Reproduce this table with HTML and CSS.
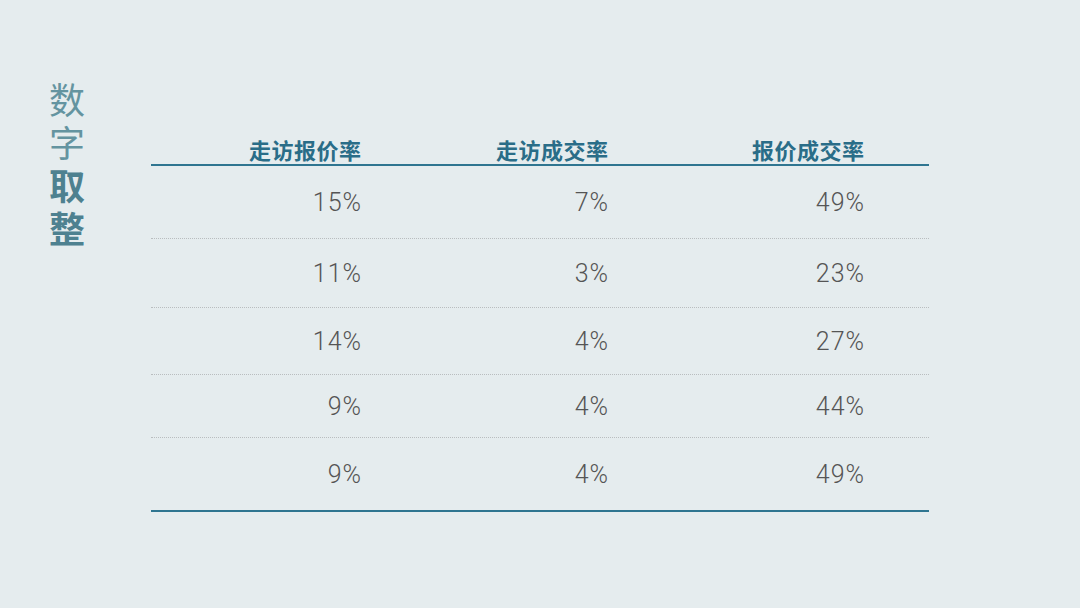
FILE: index.html
```html
<!DOCTYPE html>
<html lang="zh">
<head>
<meta charset="utf-8">
<link rel="stylesheet" href="styles.css">
</head>
<body>
<div class="page">
  <div class="side-title">
    <span class="light">数字</span><span class="bold">取整</span>
  </div>
  <div class="table">
    <div class="head">
      <div class="cell h">走访报价率</div>
      <div class="cell h">走访成交率</div>
      <div class="cell h">报价成交率</div>
      <div class="cell"></div>
    </div>
    <div class="row r1">
      <div class="cell">15%</div><div class="cell">7%</div><div class="cell">49%</div><div class="cell"></div>
    </div>
    <div class="row r2">
      <div class="cell">11%</div><div class="cell">3%</div><div class="cell">23%</div><div class="cell"></div>
    </div>
    <div class="row r3">
      <div class="cell">14%</div><div class="cell">4%</div><div class="cell">27%</div><div class="cell"></div>
    </div>
    <div class="row r4">
      <div class="cell">9%</div><div class="cell">4%</div><div class="cell">44%</div><div class="cell"></div>
    </div>
    <div class="row r5 last">
      <div class="cell">9%</div><div class="cell">4%</div><div class="cell">49%</div><div class="cell"></div>
    </div>
  </div>
</div>
</body>
</html>
```
FILE: styles.css
```css
html, body {
  margin: 0;
  padding: 0;
}
body {
  background: #e5ecee;
  width: 1080px;
  height: 608px;
  overflow: hidden;
  font-family: "Liberation Sans", "Noto Sans CJK SC", sans-serif;
}
.page {
  display: flex;
  align-items: flex-start;
  padding-left: 48px;
}
.side-title {
  writing-mode: vertical-rl;
  width: 38px;
  margin-top: 82px;
  font-family: "Noto Sans CJK SC", sans-serif;
  font-size: 36px;
  line-height: 38px;
  letter-spacing: 7px;
}
.side-title .light {
  color: #6494a0;
  font-weight: 400;
}
.side-title .bold {
  color: #4e8190;
  font-weight: 700;
}
.table {
  margin-left: 65px;
  margin-top: 134px;
  width: 778px;
}
.head, .row {
  display: grid;
  grid-template-columns: 210px 247px 256px 1fr;
  align-items: center;
}
.head {
  height: 30px;
  border-bottom: 2px solid #2f7590;
  align-items: start;
}
.h {
  font-family: "Noto Sans CJK SC", sans-serif;
  font-weight: 700;
  font-size: 22px;
  line-height: 30px;
  color: #2a6d88;
  letter-spacing: 0.5px;
  margin-right: -0.5px;
}
.cell {
  text-align: right;
}
.row {
  font-family: Roboto, "Liberation Sans", sans-serif;
  font-weight: 300;
  font-size: 25px;
  color: #555555;
  border-bottom: 1px dotted #b9bdbf;
}
.row .cell {
  letter-spacing: 1px;
  margin-right: -1px;
}
.row.last {
  border-bottom: 2px solid #2f7590;
}
.r1 { height: 72px; }
.r2 { height: 68px; }
.r3 { height: 66px; }
.r4 { height: 62px; }
.r5 { height: 72px; }
```
